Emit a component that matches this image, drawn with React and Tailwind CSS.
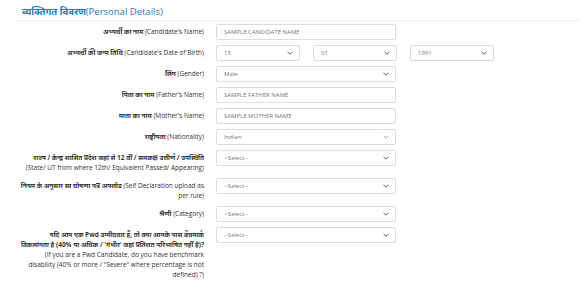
import React from "react";

const font = { fontFamily: '"Open Sans", "Noto Sans", "DejaVu Sans", sans-serif' };

function Chevron({ light }) {
  return (
    <svg
      width="6"
      height="4"
      viewBox="0 0 10 6"
      className={light ? "text-gray-400" : "text-gray-600"}
      fill="none"
      stroke="currentColor"
      strokeWidth="1.6"
    >
      <path d="M1 1l4 4 4-4" />
    </svg>
  );
}

function Box({ value, select, light, className = "w-[180px]" }) {
  return (
    <div
      className={`${className} h-[16px] flex items-center justify-between border border-[#dcdcdc] rounded-[2px] bg-white pl-[7px] pr-[6px] text-[6px] text-[#777]`}
    >
      <span>{value}</span>
      {select && <Chevron light={light} />}
    </div>
  );
}

function Row({ hi, en, children }) {
  return (
    <div className="flex items-start gap-[12px] mb-[5px]">
      <div className="w-[184px] shrink-0 text-right text-[6.5px] leading-[10px] pt-[3px] text-[#333]">
        <span className="font-bold">{hi}</span> {en}
      </div>
      {children}
    </div>
  );
}

export default function App() {
  return (
    <div className="w-[588px] h-[302px] bg-white overflow-hidden pl-[15px] pr-[8px]" style={font}>
      <div className="pt-[6px] pb-[2px] pl-[7px] border-b border-[#efefef] text-[9.5px] leading-[12px] font-medium text-[#1f7bc1]">
        <span className="font-bold">व्यक्तिगत विवरण</span>(Personal Details)
      </div>
      <div className="pt-[3px] pl-[5px]">
        <Row hi="अभ्यर्थी का नाम" en="(Candidate's Name)">
          <Box value="SAMPLE CANDIDATE NAME" />
        </Row>
        <Row hi="अभ्यर्थी की जन्म तिथि" en="(Candidate's Date of Birth)">
          <div className="flex gap-[13px]">
            <Box value="15" select className="w-[84px]" />
            <Box value="01" select className="w-[84px]" />
            <Box value="1991" select className="w-[84px]" />
          </div>
        </Row>
        <Row hi="लिंग" en="(Gender)">
          <Box value="Male" select />
        </Row>
        <Row hi="पिता का नाम" en="(Father's Name)">
          <Box value="SAMPLE FATHER NAME" />
        </Row>
        <Row hi="माता का नाम" en="(Mother's Name)">
          <Box value="SAMPLE MOTHER NAME" />
        </Row>
        <Row hi="राष्ट्रीयता" en="(Nationality)">
          <Box value="Indian" select light />
        </Row>
        <Row
          hi="राज्य / केन्द्र शासित प्रदेश जहां से 12 वीं / समकक्ष उत्तीर्ण / उपस्थिति"
          en="(State/ UT from where 12th/ Equivalent Passed/ Appearing)"
        >
          <Box value="--Select--" select />
        </Row>
        <Row hi="नियम के अनुसार स्व घोषणा पत्र अपलोड" en="(Self Declaration upload as per rule)">
          <Box value="--Select--" select />
        </Row>
        <Row hi="श्रेणी" en="(Category)">
          <Box value="--Select--" select />
        </Row>
        <Row
          hi="यदि आप एक Pwd उम्मीदवार हैं, तो क्या आपके पास बेंचमार्क विकलांगता है (40% या अधिक / 'गंभीर' जहां प्रतिशत परिभाषित नहीं है)?"
          en={'(If you are a Pwd Candidate, do you have benchmark disability (40% or more / "Severe" where percentage is not defined) ?)'}
        >
          <Box value="--Select--" select />
        </Row>
      </div>
    </div>
  );
}
